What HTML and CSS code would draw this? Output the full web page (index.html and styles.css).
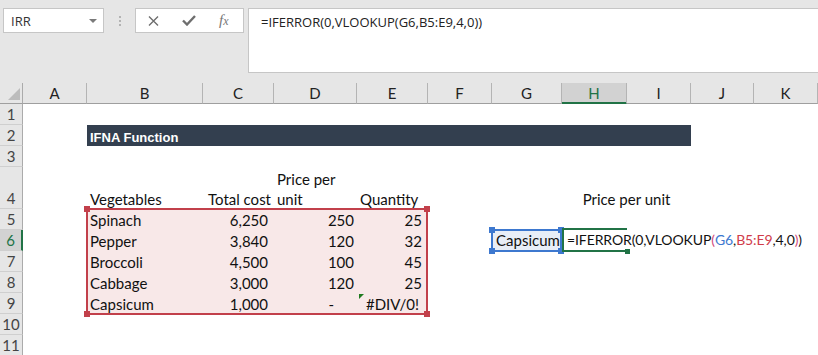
FILE: index.html
```html
<html>
    <head>
        <meta charset="UTF-8">
        <link rel="stylesheet" href="styles.css">
    </head>
    <body>
        <!-- formula bar -->
        <div class="toolbar">
            <div class="namebox"><span>IRR</span><span class="caret"></span></div>
            <div class="grip"><i></i><i></i><i></i></div>
            <div class="fbtns">
                <svg width="11" height="10" viewBox="0 0 11 10"><path d="M1 0.5 L10 9.5 M10 0.5 L1 9.5" stroke="#6e6e6e" stroke-width="1.4" fill="none"/></svg>
                <svg width="14" height="11" viewBox="0 0 14 11"><path d="M1 5.5 L5 9.5 L13 1" stroke="#6e6e6e" stroke-width="2.4" fill="none"/></svg>
                <span class="fx">f<span class="fx-x">x</span></span>
            </div>
            <div class="finput">=IFERROR(0,VLOOKUP(G6,B5:E9,4,0))</div>
        </div>

        <!-- column letters -->
        <div class="colheads">
            <div class="corner"><svg width="14" height="14" viewBox="0 0 14 14"><path d="M13 1 L13 13 L1 13 Z" fill="#bcbcbc"/></svg></div>
            <div>A</div><div>B</div><div>C</div><div>D</div><div>E</div><div>F</div>
            <div>G</div><div class="on">H</div><div>I</div><div>J</div><div>K</div>
        </div>

        <!-- worksheet -->
        <div class="sheet">
            <div class="rh r1">1</div>
            <div class="rh r2">2</div>
            <div class="rh r3">3</div>
            <div class="rh r4">4</div>
            <div class="rh r5">5</div>
            <div class="rh r6 on">6</div>
            <div class="rh r7">7</div>
            <div class="rh r8">8</div>
            <div class="rh r9">9</div>
            <div class="rh r10">10</div>
            <div class="rh r11">11</div>

            <div class="title r2">IFNA Function</div>

            <div class="ref-red"><i class="h tl"></i><i class="h tr"></i><i class="h bl"></i><i class="h br"></i></div>

            <div class="cell cB r4">Vegetables</div>
            <div class="cell cC r4 num">Total cost</div>
            <div class="cell cD r4"><span>Price per<br>unit</span></div>
            <div class="cell cE r4">Quantity</div>
            <div class="cell cHI r4 center">Price per unit</div>

            <div class="cell cB r5">Spinach</div>
            <div class="cell cC r5 num pad6">6,250</div>
            <div class="cell cD r5 num">250</div>
            <div class="cell cE r5 num pad6">25</div>

            <div class="cell cB r6">Pepper</div>
            <div class="cell cC r6 num pad6">3,840</div>
            <div class="cell cD r6 num">120</div>
            <div class="cell cE r6 num pad6">32</div>

            <div class="cell cB r7">Broccoli</div>
            <div class="cell cC r7 num pad6">4,500</div>
            <div class="cell cD r7 num">100</div>
            <div class="cell cE r7 num pad6">45</div>

            <div class="cell cB r8">Cabbage</div>
            <div class="cell cC r8 num pad6">3,000</div>
            <div class="cell cD r8 num">120</div>
            <div class="cell cE r8 num pad6">25</div>

            <div class="cell cB r9">Capsicum</div>
            <div class="cell cC r9 num pad6">1,000</div>
            <div class="cell cD r9 num dash">-</div>
            <div class="cell cE r9 center"><i class="flag"></i>#DIV/0!</div>

            <div class="cell cG r6 ref-blue">Capsicum<i class="h tl"></i><i class="h tr"></i><i class="h bl"></i><i class="h br"></i></div>
            <div class="cell cH r6 editing">=IFERROR<span class="p">(</span>0,VLOOKUP<span class="p2">(</span><span class="g6">G6</span>,<span class="rng">B5:E9</span>,4,0<span class="p2">)</span>)<i class="caretbar"></i><i class="gh"></i></div>
        </div>
    </body>
</html>
```

FILE: styles.css
```css
:root {
    --cols: 23px 64px 116px 71px 83px 71px 64px 70px 65px 64px 63px 64px;
    --green: #217346;
}

html, body {
    margin: 0px;
    font-family: Lato, sans-serif;
    background: white;
    overflow: hidden;
}

/* formula bar */
.toolbar {
    display: flex;
    align-items: flex-start;
    height: 83px;
    box-sizing: border-box;
    padding: 8px 0 0 3px;
    background: #e6e6e6;
}
.namebox {
    box-sizing: border-box;
    width: 101px;
    height: 25px;
    display: flex;
    align-items: center;
    justify-content: space-between;
    padding: 0 6px 0 7px;
    background: white;
    border: 1px solid #c6c6c6;
    font: 13px "Open Sans", sans-serif;
    color: #333;
}
.caret {
    border-left: 4px solid transparent;
    border-right: 4px solid transparent;
    border-top: 4px solid #7a7a7a;
}
.grip {
    display: flex;
    flex-direction: column;
    gap: 2px;
    margin: 8px 14px 0 15px;
}
.grip i {
    width: 2px;
    height: 2px;
    background: #b3b3b3;
}
.fbtns {
    box-sizing: border-box;
    width: 109px;
    height: 25px;
    display: flex;
    align-items: center;
    gap: 23px;
    padding-left: 12px;
    background: white;
    border: 1px solid #c6c6c6;
}
.fx {
    font: italic 15px "Liberation Serif", serif;
    color: #777;
}
.fx-x {
    font-size: 12px;
}
.finput {
    flex: 1;
    box-sizing: border-box;
    height: 65px;
    margin-left: 4px;
    padding: 2px 0 0 12px;
    background: white;
    border: 1px solid #c6c6c6;
    border-right: 0;
    font: 13px "Open Sans", sans-serif;
    line-height: 22px;
    color: #222;
}

/* headers */
.colheads {
    display: grid;
    grid-template-columns: var(--cols);
    height: 21px;
    background: #e6e6e6;
}
.colheads div {
    border-right: 1px solid #b4b4b4;
    border-bottom: 1px solid #9f9f9f;
    text-align: center;
    font-size: 15px;
    line-height: 20px;
    color: #222;
}
.colheads .corner {
    display: flex;
    align-items: flex-end;
    justify-content: flex-end;
    padding: 0 1px 2px 0;
    border-right-color: #ababab;
}
.colheads .on {
    background: #d2d2d2;
    color: var(--green);
    border-bottom-color: var(--green);
    box-shadow: inset 0 -1px var(--green);
}

.sheet {
    display: grid;
    grid-template-columns: var(--cols);
    grid-template-rows: 21px 21px 21px 42px repeat(7, 21px);
}
.rh {
    grid-column: 1;
    box-sizing: border-box;
    display: flex;
    align-items: flex-end;
    justify-content: center;
    background: #e6e6e6;
    border-right: 1px solid #ababab;
    border-bottom: 1px solid #cfcfcf;
    font-size: 15px;
    line-height: 20px;
    color: #444;
}
.rh.on {
    background: #d2d2d2;
    color: var(--green);
    border-right: 2px solid var(--green);
}

.r1 { grid-row: 1; }
.r2 { grid-row: 2; }
.r3 { grid-row: 3; }
.r4 { grid-row: 4; }
.r5 { grid-row: 5; }
.r6 { grid-row: 6; }
.r7 { grid-row: 7; }
.r8 { grid-row: 8; }
.r9 { grid-row: 9; }
.r10 { grid-row: 10; }
.r11 { grid-row: 11; }

.cB { grid-column: 3; }
.cC { grid-column: 4; }
.cD { grid-column: 5; }
.cE { grid-column: 6; }
.cG { grid-column: 8; }
.cH { grid-column: 9; }
.cHI { grid-column: 9 / 11; }

.title {
    grid-column: 3 / 11;
    display: flex;
    align-items: flex-end;
    padding-left: 3px;
    background: #333f4f;
    color: white;
    font: bold 13px "Liberation Sans", Arial, sans-serif;
    line-height: 17px;
}

.cell {
    position: relative;
    display: flex;
    align-items: flex-end;
    padding: 0 3px;
    font-size: 15px;
    line-height: 20px;
    white-space: nowrap;
    color: #111;
}
.num {
    justify-content: flex-end;
}
.pad6 {
    padding-right: 6px;
}
.center {
    justify-content: center;
}
.dash {
    padding-right: 23px;
}
.flag {
    position: absolute;
    top: 1px;
    left: 2px;
    border-top: 5px solid #1f7a1f;
    border-right: 5px solid transparent;
}

/* range highlight for B5:E9 */
.ref-red {
    position: relative;
    grid-column: 3 / 7;
    grid-row: 5 / 10;
    margin: -1px 0 -1px -1px;
    background: #f8e8e8;
    border: 2px solid #c2404b;
}
.h {
    position: absolute;
    width: 6px;
    height: 6px;
    background: #c2404b;
}
.tl { top: -4px; left: -4px; }
.tr { top: -4px; right: -4px; }
.bl { bottom: -4px; left: -4px; }
.br { bottom: -4px; right: -4px; }

.ref-blue {
    margin: -1px 0 -1px -1px;
    padding-left: 3px;
    background: #e8eef7;
    border: 2px solid #3d78cf;
}
.ref-blue .h {
    background: #3d78cf;
}

.editing {
    margin: -2px 0 -1px 0;
    padding-left: 3px;
    background: white;
    border: 2px solid var(--green);
    border-right: 0;
    font-size: 14px;
    letter-spacing: -0.1px;
}
.editing .p2 { color: #d24a7d; }
.editing .g6 { color: #3d78cf; }
.editing .rng { color: #d03c4a; }
.caretbar {
    display: inline-block;
    width: 2px;
    height: 19px;
    margin: 0 0 -3px 2px;
    background: #555;
}
.gh {
    position: absolute;
    right: -3px;
    bottom: -4px;
    width: 5px;
    height: 5px;
    background: var(--green);
}
```
